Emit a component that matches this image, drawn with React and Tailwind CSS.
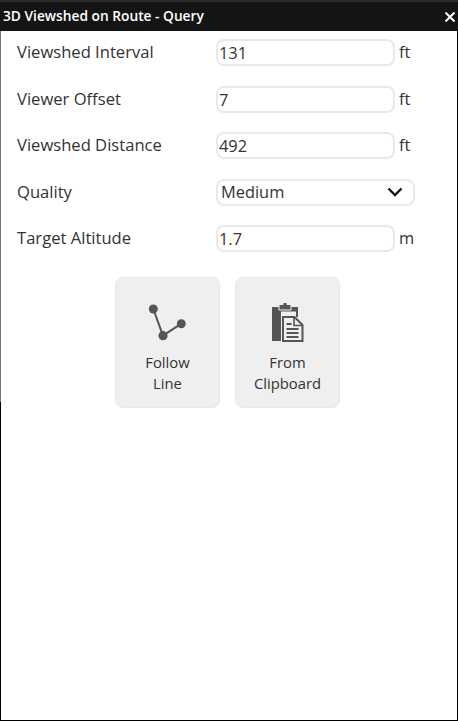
import { useState } from 'react';

const fieldsTop = [
  { label: 'Viewshed Interval', value: '131', unit: 'ft' },
  { label: 'Viewer Offset', value: '7', unit: 'ft' },
  { label: 'Viewshed Distance', value: '492', unit: 'ft' },
];

const Field = ({ label, value, unit }) => (
  <div className="flex items-center h-[27px] mb-[19.5px]">
    <span className="w-[199px] text-[16.6px] text-[#333]">{label}</span>
    <input
      defaultValue={value}
      className="w-[179px] h-[27px] pl-[1px] bg-white border-2 border-[#e9e9e9] rounded-lg text-[16.4px] text-[#333] outline-none"
    />
    <span className="ml-[4px] text-[16.4px] text-[#333]">{unit}</span>
  </div>
);

const FollowLineIcon = () => (
  <svg width="40" height="40" viewBox="0 -2 40 40" fill="#555">
    <path d="M5.3 5 L15 31.7 L33.3 19.7" fill="none" stroke="#555" strokeWidth="2" />
    <circle cx="5.3" cy="5" r="4.5" />
    <circle cx="15" cy="31.7" r="4.6" />
    <circle cx="33.3" cy="19.7" r="4.5" />
  </svg>
);

const ClipboardIcon = () => (
  <svg width="34" height="41" viewBox="0 0 34 41">
    <path d="M1 6h26v10H10v24H1z" fill="#555" />
    <path d="M10 10.5h15V16H10z" fill="#efefef" />
    <path d="M8 3.5h4V1.5h4v2h4V9H8z" fill="#555" stroke="#efefef" strokeWidth="1" />
    <path d="M12 16h11.5l8 8v16H12z" fill="#efefef" stroke="#555" strokeWidth="2" />
    <path d="M23 15.5v9h9" fill="none" stroke="#555" strokeWidth="1.6" />
    <path d="M15.5 23h5M15.5 28h12M15.5 32h12M15.5 36h12" stroke="#555" strokeWidth="1.8" />
  </svg>
);

const ActionButton = ({ icon, children }) => (
  <button className="w-[105px] h-[131px] flex flex-col items-center bg-[#efefef] border border-[#e6e6ee] rounded-lg pt-[25px] text-[14.8px] leading-[21px] text-[#333]">
    <div className="h-[38px] flex items-center justify-center">{icon}</div>
    <div className="mt-[11px] text-center">{children}</div>
  </button>
);

export default function App() {
  const [quality] = useState('Medium');

  return (
    <div className="w-[458px] h-[721px] flex flex-col bg-white font-['Open_Sans',sans-serif]">
      {/* title bar */}
      <div className="h-[31px] shrink-0 bg-[#141414] border-t-2 border-[#2b2b2b] flex items-center justify-between pl-[3px] pr-[3px]">
        <span className="text-[13.75px] font-semibold text-white">3D Viewshed on Route - Query</span>
        <svg width="10" height="10" viewBox="0 0 10 10" stroke="white" strokeWidth="2">
          <path d="M0.5 0.5 L9.5 9.5 M9.5 0.5 L0.5 9.5" />
        </svg>
      </div>

      <div className="flex-1 flex min-h-0">
        <div className="w-px shrink-0 flex flex-col">
          <div className="h-[371px] bg-[#777]" />
          <div className="flex-1 bg-black" />
        </div>

        <div className="flex-1 pl-[16px] pt-[8px]">
          {fieldsTop.map((f) => (
            <Field key={f.label} {...f} />
          ))}

          <div className="flex items-center h-[27px] mb-[19.5px]">
            <span className="w-[199px] text-[16.6px] text-[#333]">Quality</span>
            <div className="w-[199px] h-[27px] pl-[3px] pr-[4px] bg-white border-2 border-[#e9e9e9] rounded-lg flex items-center justify-between text-[16.4px] text-[#333]">
              <span>{quality}</span>
              <svg width="16" height="10" viewBox="0 0 16 10" fill="none" stroke="#111" strokeWidth="2.4" className="mr-[6px]">
                <path d="M1.5 1.5 L8 8 L14.5 1.5" />
              </svg>
            </div>
          </div>

          <Field label="Target Altitude" value="1.7" unit="m" />

          <div className="flex gap-[15px] ml-[98px] mt-[24.5px]">
            <ActionButton icon={<FollowLineIcon />}>
              Follow<br />Line
            </ActionButton>
            <ActionButton icon={<ClipboardIcon />}>
              From<br />Clipboard
            </ActionButton>
          </div>
        </div>

        <div className="w-px shrink-0 bg-black" />
      </div>

      <div className="h-px shrink-0 bg-black" />
    </div>
  );
}
